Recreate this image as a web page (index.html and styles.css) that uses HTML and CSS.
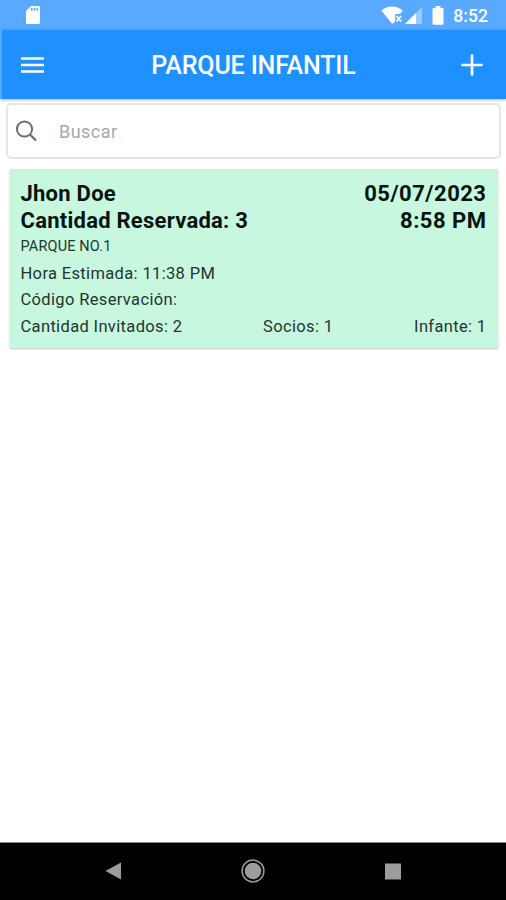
FILE: index.html
```html
<!DOCTYPE html>
<html lang="es">
<head>
  <meta charset="UTF-8">
  <meta name="viewport" content="width=device-width, initial-scale=1.0">
  <title>Parque Infantil</title>
  <link rel="stylesheet" href="styles.css">
</head>
<body>

  <div class="status-bar">
    <svg class="sd-icon" viewBox="0 0 16 20">
      <path fill="#fff" d="M6 1h7.500a1.500 1.500 0 0 1 1.500 1.500v15a1.500 1.500 0 0 1-1.500 1.500h-11A1.500 1.500 0 0 1 1 17.500V6z"/>
      <path stroke="#58a9ff" stroke-width="1.500" d="M6.700 2.800v2.900M9.400 2.800v2.900M12.100 2.800v2.900"/>
    </svg>
    <div class="status-right">
      <svg class="wifi-icon" viewBox="0 0 23 18">
        <path fill="#fff" d="M.3 4.500C6-.7 16-.7 21.700 4.500L19.200 8h-5v7l-1.900 2.500h-1.400z"/>
        <path stroke="#fff" stroke-width="1.800" d="M15.500 10l4.500 5.500M20 10l-4.500 5.500"/>
      </svg>
      <svg class="signal-icon" viewBox="0 0 17 17">
        <path fill="#9bcbff" d="M17 0v17H0z"/>
        <path fill="#fff" d="M11 6v11H0z"/>
      </svg>
      <svg class="battery-icon" viewBox="0 0 12 19">
        <path fill="#fff" d="M3.500 0h5v2h1.700A1.300 1.300 0 0 1 11.500 3.300v14.200a1.300 1.300 0 0 1-1.300 1.300H1.800A1.300 1.300 0 0 1 .5 17.500V3.300A1.300 1.300 0 0 1 1.800 2h1.700z"/>
      </svg>
      <span class="clock">8:52</span>
    </div>
  </div>

  <header class="toolbar">
    <svg class="menu-icon" viewBox="0 0 23 16">
      <path stroke="#fff" stroke-width="2.300" d="M0 1.500h23M0 8h23M0 14.500h23"/>
    </svg>
    <h1>PARQUE INFANTIL</h1>
    <svg class="add-icon" viewBox="0 0 22 22">
      <path stroke="#fff" stroke-width="2.700" stroke-linecap="round" d="M11 1.500v19M1.500 11h19"/>
    </svg>
  </header>

  <main>
    <div class="search">
      <svg class="search-icon" viewBox="0 0 22 22">
        <circle cx="9.500" cy="9" r="7.600" fill="none" stroke="#6e6e6e" stroke-width="2"/>
        <path stroke="#6e6e6e" stroke-width="2.300" d="M15 14.500l6 6"/>
      </svg>
      <input type="text" placeholder="Buscar" aria-label="Buscar">
    </div>

    <section class="card">
      <div class="row bold"><span class="name">Jhon Doe</span><span class="date">05/07/2023</span></div>
      <div class="row bold"><span class="reserved">Cantidad Reservada: 3</span><span class="time">8:58 PM</span></div>
      <div class="row place"><span>PARQUE NO.1</span></div>
      <div class="row"><span>Hora Estimada: 11:38 PM</span></div>
      <div class="row"><span>Código Reservación:</span></div>
      <div class="row"><span>Cantidad Invitados: 2</span><span>Socios: 1</span><span>Infante: 1</span></div>
    </section>
  </main>

  <nav class="nav-bar">
    <svg class="nav-icon" viewBox="0 0 24 24"><path fill="#9c9c9c" d="M4.500 12l15.500-8.500v17z"/></svg>
    <svg class="nav-icon" viewBox="0 0 24 24">
      <circle cx="12" cy="12" r="10.900" fill="none" stroke="#9c9c9c" stroke-width="1.500"/>
      <circle cx="12" cy="12" r="8.300" fill="#9c9c9c"/>
    </svg>
    <svg class="nav-icon" viewBox="0 0 24 24"><path fill="#9c9c9c" d="M4 4.500h16v16H4z"/></svg>
  </nav>

</body>
</html>
```

FILE: styles.css
```css
:root {
  --primary: #1e90ff;
  --status: #58a9ff;
  --card: #c8f7df;
}
*, *::before, *::after { box-sizing: border-box; margin: 0; padding: 0; }
body {
  height: 100vh;
  display: flex;
  flex-direction: column;
  overflow: hidden;
  background: #fff;
  font-family: Roboto, sans-serif;
  color: #24352d;
}
svg { display: block; flex: none; }

/* status bar */
.status-bar {
  height: 30px;
  flex: none;
  display: flex;
  align-items: center;
  justify-content: space-between;
  padding: 0 18px 0 25px;
  background: var(--status);
}
.sd-icon { width: 16px; height: 20px; }
.status-right { display: flex; align-items: center; color: #fff; }
.wifi-icon { width: 23px; height: 18px; }
.signal-icon { width: 17px; height: 17px; margin-left: 1px; }
.battery-icon { width: 12px; height: 19px; margin-left: 10px; }
.clock {
  margin-left: 9px;
  font-size: 17.600px;
  font-weight: 500;
  line-height: 30px;
  padding-top: 2px;
}

/* toolbar */
.toolbar {
  height: 69px;
  flex: none;
  display: flex;
  align-items: center;
  justify-content: space-between;
  padding: 1px 23px 0 19px;
  background: var(--primary);
  border-left: 2px solid var(--status);
  box-shadow: 0 1px 3px rgba(0,0,0,0.3);
}
.toolbar h1 {
  padding: 2px 0 0 2px;
  font-size: 25px;
  font-weight: 500;
  line-height: 30px;
  letter-spacing: -0.150px;
  color: #fff;
}
.menu-icon { width: 23px; height: 16px; }
.add-icon { width: 22px; height: 22px; }

main { flex: 1; padding: 4px 5px 0 6px; }

/* search */
.search {
  height: 56px;
  display: flex;
  align-items: center;
  padding: 0 7px;
  background: #fff;
  border: 2px solid #e6e4e4;
  border-radius: 5px;
}
.search-icon { width: 22px; height: 22px; }
.search input {
  flex: 1;
  margin-left: 22px;
  padding-top: 1px;
  border: none;
  outline: none;
  background: transparent;
  font: 400 18px Roboto, sans-serif;
  letter-spacing: 0.450px;
}
.search input::placeholder { color: #a8a8a8; }

/* reservation card */
.card {
  height: 179px;
  margin: 10px 3px 0 4px;
  padding: 12px 11.500px 0 10.500px;
  background: var(--card);
  box-shadow: 0 1px 2px rgba(0,0,0,0.25);
}
.row {
  display: flex;
  justify-content: space-between;
  height: 26.500px;
  line-height: 26.500px;
  font-size: 16.500px;
  letter-spacing: 0.350px;
  white-space: nowrap;
}
.bold {
  font-size: 22px;
  font-weight: 700;
  letter-spacing: 0.250px;
  color: #07140d;
}
.date, .time { letter-spacing: 0.500px; }
.place { font-size: 14.500px; letter-spacing: 0.150px; }

/* android navigation */
.nav-bar {
  height: 58px;
  flex: none;
  display: flex;
  align-items: center;
  justify-content: space-between;
  padding: 0 101px 1px;
  background: #000;
  border-top: 1px solid #888;
}
.nav-icon { width: 24px; height: 24px; }
```
